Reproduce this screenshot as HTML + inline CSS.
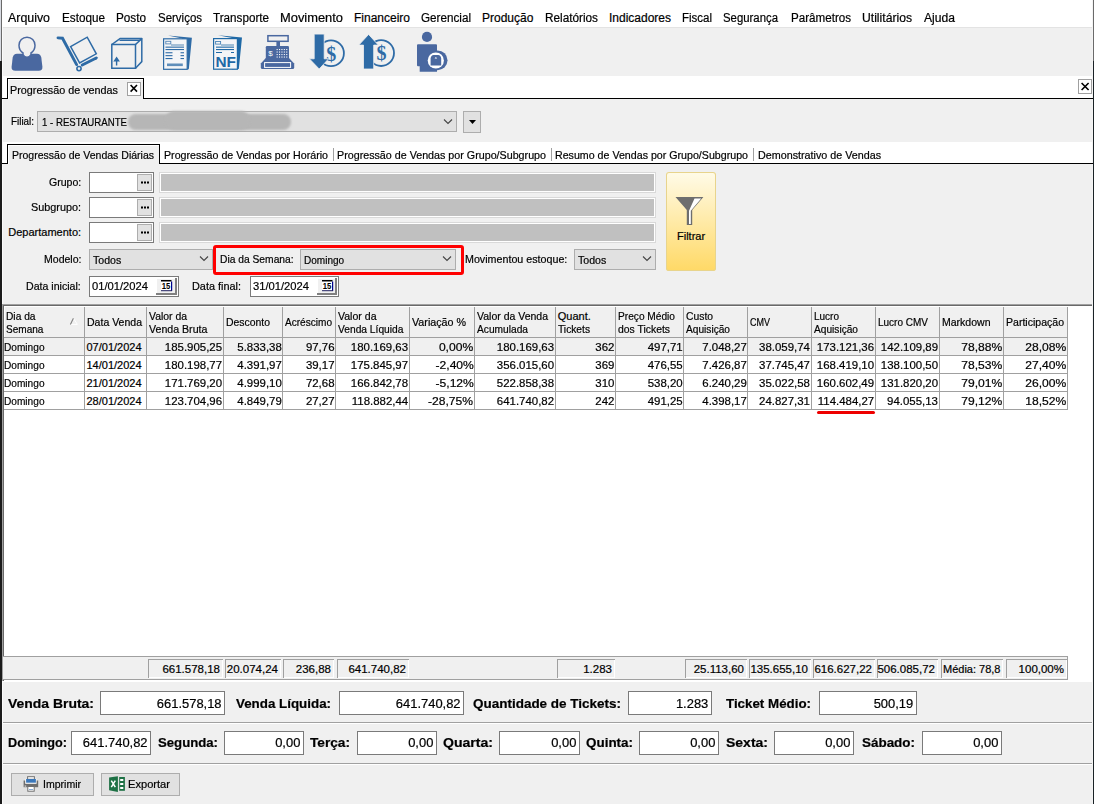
<!DOCTYPE html><html><head><meta charset="utf-8"><style>
html,body{margin:0;padding:0;}
body{width:1094px;height:804px;overflow:hidden;position:relative;background:#f0f0f0;font-family:"Liberation Sans",sans-serif;}
div{position:absolute;}
.t{white-space:nowrap;line-height:20px;height:20px;-webkit-text-stroke:0.2px currentColor;}
svg{position:absolute;left:0;top:0;}
</style></head><body>
<div style="left:0px;top:0px;width:1094px;height:27px;background:#fff"></div>
<div style="left:2px;top:27px;width:1091px;height:1px;background:#e3e3e3"></div>
<div style="left:2px;top:28px;width:1091px;height:48px;background:#f0f0f0"></div>
<div style="left:2px;top:76px;width:1091px;height:22px;background:#fff"></div>
<div style="left:2px;top:98px;width:1091px;height:1px;background:#000"></div>
<div class="t" style="left:8.00px;top:7.54px;font-size:12px;color:#000;transform:scaleX(1.0323);transform-origin:left;">Arquivo</div>
<div class="t" style="left:62.00px;top:7.54px;font-size:12px;color:#000;transform:scaleX(0.9766);transform-origin:left;">Estoque</div>
<div class="t" style="left:116.00px;top:7.54px;font-size:12px;color:#000;transform:scaleX(0.9777);transform-origin:left;">Posto</div>
<div class="t" style="left:158.00px;top:7.54px;font-size:12px;color:#000;transform:scaleX(0.9563);transform-origin:left;">Serviços</div>
<div class="t" style="left:213.00px;top:7.54px;font-size:12px;color:#000;transform:scaleX(0.9726);transform-origin:left;">Transporte</div>
<div class="t" style="left:280.00px;top:7.54px;font-size:12px;color:#000;transform:scaleX(1.0736);transform-origin:left;">Movimento</div>
<div class="t" style="left:354.00px;top:7.54px;font-size:12px;color:#000;">Financeiro</div>
<div class="t" style="left:421.00px;top:7.54px;font-size:12px;color:#000;transform:scaleX(0.9736);transform-origin:left;">Gerencial</div>
<div class="t" style="left:482.00px;top:7.54px;font-size:12px;color:#000;">Produção</div>
<div class="t" style="left:545.00px;top:7.54px;font-size:12px;color:#000;transform:scaleX(0.9811);transform-origin:left;">Relatórios</div>
<div class="t" style="left:609.00px;top:7.54px;font-size:12px;color:#000;">Indicadores</div>
<div class="t" style="left:682.00px;top:7.54px;font-size:12px;color:#000;transform:scaleX(0.9574);transform-origin:left;">Fiscal</div>
<div class="t" style="left:723.00px;top:7.54px;font-size:12px;color:#000;transform:scaleX(0.9476);transform-origin:left;">Segurança</div>
<div class="t" style="left:791.00px;top:7.54px;font-size:12px;color:#000;transform:scaleX(0.9675);transform-origin:left;">Parâmetros</div>
<div class="t" style="left:862.00px;top:7.54px;font-size:12px;color:#000;transform:scaleX(1.0134);transform-origin:left;">Utilitários</div>
<div class="t" style="left:924.00px;top:7.54px;font-size:12px;color:#000;transform:scaleX(1.0101);transform-origin:left;">Ajuda</div>
<div style="left:7px;top:78px;width:137px;height:21px;background:#000"></div>
<div style="left:8px;top:79px;width:135px;height:20px;background:#fff"></div>
<div style="left:9px;top:80px;width:134px;height:19px;background:#f0f0f0"></div>
<div class="t" style="left:9.50px;top:80.19px;font-size:11px;color:#000;transform:scaleX(0.9813);transform-origin:left;">Progressão de vendas</div>
<div style="left:127px;top:82px;width:14px;height:14px;background:#fff;box-shadow:inset 0 0 0 1px #a0a0a0"></div>
<div style="left:1078px;top:79px;width:14px;height:15px;background:#fff;box-shadow:inset 0 0 0 1px #a0a0a0"></div>
<div class="t" style="left:11.00px;top:111.19px;font-size:11px;color:#000;transform:scaleX(0.8961);transform-origin:left;">Filial:</div>
<div style="left:37px;top:111px;width:420px;height:21px;background:#e1e1e1;box-shadow:inset 0 0 0 1px #adadad"></div>
<div class="t" style="left:42.00px;top:112.19px;font-size:11px;color:#000;transform:scaleX(0.8765);transform-origin:left;">1 - RESTAURANTE</div>
<div style="left:463px;top:111px;width:18px;height:22px;background:#e1e1e1;box-shadow:inset 0 0 0 1px #adadad"></div>
<div style="left:2px;top:142px;width:1091px;height:21px;background:#fff"></div>
<div style="left:2px;top:163px;width:1091px;height:1px;background:#000"></div>
<div style="left:7px;top:144px;width:153px;height:20px;background:#000"></div>
<div style="left:8px;top:145px;width:151px;height:19px;background:#fff"></div>
<div style="left:9px;top:146px;width:150px;height:18px;background:#f0f0f0"></div>
<div class="t" style="left:11.50px;top:145.19px;font-size:11px;color:#000;transform:scaleX(0.9557);transform-origin:left;">Progressão de Vendas Diárias</div>
<div class="t" style="left:164.00px;top:145.19px;font-size:11px;color:#000;transform:scaleX(0.9683);transform-origin:left;">Progressão de Vendas por Horário</div>
<div class="t" style="left:337.00px;top:145.19px;font-size:11px;color:#000;transform:scaleX(0.9738);transform-origin:left;">Progressão de Vendas por Grupo/Subgrupo</div>
<div class="t" style="left:555.00px;top:145.19px;font-size:11px;color:#000;transform:scaleX(0.9682);transform-origin:left;">Resumo de Vendas por Grupo/Subgrupo</div>
<div class="t" style="left:758.00px;top:145.19px;font-size:11px;color:#000;transform:scaleX(0.9765);transform-origin:left;">Demonstrativo de Vendas</div>
<div style="left:333px;top:148px;width:1px;height:13px;background:#a0a0a0"></div>
<div style="left:551px;top:148px;width:1px;height:13px;background:#a0a0a0"></div>
<div style="left:753px;top:148px;width:1px;height:13px;background:#a0a0a0"></div>
<div class="t" style="left:48.70px;top:172.19px;font-size:11px;color:#000;transform:scaleX(0.9606);transform-origin:left;">Grupo:</div>
<div style="left:89px;top:172px;width:65px;height:21px;background:#fff;box-shadow:inset 0 0 0 1px #7a7a7a"></div>
<div style="left:137px;top:174px;width:15px;height:17px;background:#e1e1e1;box-shadow:inset 0 0 0 1px #adadad"></div>
<div style="left:159px;top:172px;width:497px;height:21px;background:#c0c0c0;box-shadow:inset 0 0 0 1px #d9d9d9,inset 0 0 0 2px #fff"></div>
<div class="t" style="left:31.00px;top:197.19px;font-size:11px;color:#000;transform:scaleX(0.9851);transform-origin:left;">Subgrupo:</div>
<div style="left:89px;top:197px;width:65px;height:21px;background:#fff;box-shadow:inset 0 0 0 1px #7a7a7a"></div>
<div style="left:137px;top:199px;width:15px;height:17px;background:#e1e1e1;box-shadow:inset 0 0 0 1px #adadad"></div>
<div style="left:159px;top:197px;width:497px;height:21px;background:#c0c0c0;box-shadow:inset 0 0 0 1px #d9d9d9,inset 0 0 0 2px #fff"></div>
<div class="t" style="left:8.30px;top:222.19px;font-size:11px;color:#000;">Departamento:</div>
<div style="left:89px;top:222px;width:65px;height:21px;background:#fff;box-shadow:inset 0 0 0 1px #7a7a7a"></div>
<div style="left:137px;top:224px;width:15px;height:17px;background:#e1e1e1;box-shadow:inset 0 0 0 1px #adadad"></div>
<div style="left:159px;top:222px;width:497px;height:21px;background:#c0c0c0;box-shadow:inset 0 0 0 1px #d9d9d9,inset 0 0 0 2px #fff"></div>
<div style="left:666px;top:172px;width:50px;height:99px;border-radius:3px;background:linear-gradient(#fffbe8,#ffd966);box-shadow:inset 0 0 0 1px #e8d48c"></div>
<div class="t" style="left:677.00px;top:226.19px;font-size:11px;color:#000;">Filtrar</div>
<div class="t" style="left:43.50px;top:249.19px;font-size:11px;color:#000;transform:scaleX(0.9583);transform-origin:left;">Modelo:</div>
<div style="left:89px;top:249px;width:124px;height:21px;background:#e1e1e1;box-shadow:inset 0 0 0 1px #adadad"></div>
<div class="t" style="left:93.00px;top:250.19px;font-size:11px;color:#000;transform:scaleX(0.9608);transform-origin:left;">Todos</div>
<div style="left:213px;top:245px;width:251px;height:30px;box-sizing:border-box;border:3px solid #f00;border-radius:3px"></div>
<div class="t" style="left:220.00px;top:249.19px;font-size:11px;color:#000;transform:scaleX(0.9331);transform-origin:left;">Dia da Semana:</div>
<div style="left:300px;top:249px;width:156px;height:21px;background:#e1e1e1;box-shadow:inset 0 0 0 1px #adadad"></div>
<div class="t" style="left:304.00px;top:250.19px;font-size:11px;color:#000;transform:scaleX(0.9110);transform-origin:left;">Domingo</div>
<div class="t" style="left:465.00px;top:249.19px;font-size:11px;color:#000;transform:scaleX(0.9728);transform-origin:left;">Movimentou estoque:</div>
<div style="left:574px;top:249px;width:82px;height:21px;background:#e1e1e1;box-shadow:inset 0 0 0 1px #adadad"></div>
<div class="t" style="left:578.00px;top:250.19px;font-size:11px;color:#000;transform:scaleX(0.9608);transform-origin:left;">Todos</div>
<div class="t" style="left:26.30px;top:276.19px;font-size:11px;color:#000;transform:scaleX(0.9621);transform-origin:left;">Data inicial:</div>
<div style="left:89px;top:276px;width:90px;height:21px;background:#fff;box-shadow:inset 0 0 0 1px #7a7a7a"></div>
<div class="t" style="left:92.00px;top:276.19px;font-size:11px;color:#000;transform:scaleX(1.0173);transform-origin:left;">01/01/2024</div>
<div style="left:156px;top:278px;width:21px;height:17px;background:#f0f0f0;box-shadow:inset -2px -2px 0 #808080,inset 1px 1px 0 #fff"></div>
<div class="t" style="left:191.70px;top:276.19px;font-size:11px;color:#000;transform:scaleX(0.9874);transform-origin:left;">Data final:</div>
<div style="left:250px;top:276px;width:89px;height:21px;background:#fff;box-shadow:inset 0 0 0 1px #7a7a7a"></div>
<div class="t" style="left:253.00px;top:276.19px;font-size:11px;color:#000;transform:scaleX(1.0173);transform-origin:left;">31/01/2024</div>
<div style="left:317px;top:278px;width:20px;height:17px;background:#f0f0f0;box-shadow:inset -2px -2px 0 #808080,inset 1px 1px 0 #fff"></div>
<div style="left:2px;top:304px;width:1091px;height:377px;background:#fff"></div>
<div style="left:2px;top:304px;width:1090px;height:1px;background:#a0a0a0"></div>
<div style="left:2px;top:304px;width:1px;height:377px;background:#a0a0a0"></div>
<div style="left:3px;top:305px;width:1089px;height:1px;background:#696969"></div>
<div style="left:3px;top:305px;width:1px;height:376px;background:#696969"></div>
<div style="left:4px;top:306px;width:1064px;height:31px;background:#f0f0f0"></div>
<div style="left:4px;top:306px;width:1064px;height:1px;background:#fff"></div>
<div style="left:4px;top:306px;width:1px;height:31px;background:#fff"></div>
<div style="left:4px;top:337px;width:1064px;height:1px;background:#a0a0a0"></div>
<div style="left:84px;top:307px;width:1px;height:30px;background:#a0a0a0"></div>
<div class="t" style="left:5.80px;top:305.89px;font-size:11px;color:#000;transform:scaleX(0.9278);transform-origin:left;">Dia da</div>
<div class="t" style="left:5.80px;top:318.89px;font-size:11px;color:#000;transform:scaleX(0.9129);transform-origin:left;">Semana</div>
<div style="left:146px;top:307px;width:1px;height:30px;background:#a0a0a0"></div>
<div class="t" style="left:86.80px;top:312.19px;font-size:11px;color:#000;transform:scaleX(0.9567);transform-origin:left;">Data Venda</div>
<div style="left:223px;top:307px;width:1px;height:30px;background:#a0a0a0"></div>
<div class="t" style="left:148.80px;top:305.89px;font-size:11px;color:#000;transform:scaleX(0.9464);transform-origin:left;">Valor da</div>
<div class="t" style="left:148.80px;top:318.89px;font-size:11px;color:#000;transform:scaleX(0.9646);transform-origin:left;">Venda Bruta</div>
<div style="left:282px;top:307px;width:1px;height:30px;background:#a0a0a0"></div>
<div class="t" style="left:225.80px;top:312.19px;font-size:11px;color:#000;transform:scaleX(0.9469);transform-origin:left;">Desconto</div>
<div style="left:335px;top:307px;width:1px;height:30px;background:#a0a0a0"></div>
<div class="t" style="left:284.80px;top:312.19px;font-size:11px;color:#000;transform:scaleX(0.9155);transform-origin:left;">Acréscimo</div>
<div style="left:409px;top:307px;width:1px;height:30px;background:#a0a0a0"></div>
<div class="t" style="left:337.80px;top:305.89px;font-size:11px;color:#000;transform:scaleX(0.9589);transform-origin:left;">Valor da</div>
<div class="t" style="left:337.80px;top:318.89px;font-size:11px;color:#000;transform:scaleX(0.9298);transform-origin:left;">Venda Líquida</div>
<div style="left:474px;top:307px;width:1px;height:30px;background:#a0a0a0"></div>
<div class="t" style="left:411.80px;top:312.19px;font-size:11px;color:#000;transform:scaleX(0.9741);transform-origin:left;">Variação %</div>
<div style="left:555px;top:307px;width:1px;height:30px;background:#a0a0a0"></div>
<div class="t" style="left:476.80px;top:305.89px;font-size:11px;color:#000;transform:scaleX(0.9542);transform-origin:left;">Valor da Venda</div>
<div class="t" style="left:476.80px;top:318.89px;font-size:11px;color:#000;transform:scaleX(0.9268);transform-origin:left;">Acumulada</div>
<div style="left:615px;top:307px;width:1px;height:30px;background:#a0a0a0"></div>
<div class="t" style="left:557.80px;top:305.89px;font-size:11px;color:#000;">Quant.</div>
<div class="t" style="left:557.80px;top:318.89px;font-size:11px;color:#000;transform:scaleX(0.9295);transform-origin:left;">Tickets</div>
<div style="left:683px;top:307px;width:1px;height:30px;background:#a0a0a0"></div>
<div class="t" style="left:617.80px;top:305.89px;font-size:11px;color:#000;transform:scaleX(0.9231);transform-origin:left;">Preço Médio</div>
<div class="t" style="left:617.80px;top:318.89px;font-size:11px;color:#000;transform:scaleX(0.9451);transform-origin:left;">dos Tickets</div>
<div style="left:747px;top:307px;width:1px;height:30px;background:#a0a0a0"></div>
<div class="t" style="left:685.80px;top:305.89px;font-size:11px;color:#000;transform:scaleX(0.9397);transform-origin:left;">Custo</div>
<div class="t" style="left:685.80px;top:318.89px;font-size:11px;color:#000;transform:scaleX(0.9226);transform-origin:left;">Aquisição</div>
<div style="left:811px;top:307px;width:1px;height:30px;background:#a0a0a0"></div>
<div class="t" style="left:749.80px;top:312.19px;font-size:11px;color:#000;transform:scaleX(0.8182);transform-origin:left;">CMV</div>
<div style="left:875px;top:307px;width:1px;height:30px;background:#a0a0a0"></div>
<div class="t" style="left:813.80px;top:305.89px;font-size:11px;color:#000;transform:scaleX(0.9086);transform-origin:left;">Lucro</div>
<div class="t" style="left:813.80px;top:318.89px;font-size:11px;color:#000;transform:scaleX(0.9226);transform-origin:left;">Aquisição</div>
<div style="left:939px;top:307px;width:1px;height:30px;background:#a0a0a0"></div>
<div class="t" style="left:877.80px;top:312.19px;font-size:11px;color:#000;transform:scaleX(0.9089);transform-origin:left;">Lucro CMV</div>
<div style="left:1003px;top:307px;width:1px;height:30px;background:#a0a0a0"></div>
<div class="t" style="left:941.80px;top:312.19px;font-size:11px;color:#000;transform:scaleX(0.9559);transform-origin:left;">Markdown</div>
<div style="left:1067px;top:307px;width:1px;height:30px;background:#a0a0a0"></div>
<div class="t" style="left:1005.80px;top:312.19px;font-size:11px;color:#000;transform:scaleX(0.9582);transform-origin:left;">Participação</div>
<div style="left:4px;top:338px;width:1064px;height:17px;background:#f0f0f0"></div>
<div style="left:4px;top:355px;width:1064px;height:1px;background:#a0a0a0"></div>
<div style="left:84px;top:338px;width:1px;height:17px;background:#a0a0a0"></div>
<div class="t" style="left:4.20px;top:337.19px;font-size:11px;color:#000;transform:scaleX(0.9201);transform-origin:left;">Domingo</div>
<div style="left:146px;top:338px;width:1px;height:17px;background:#a0a0a0"></div>
<div class="t" style="left:86.50px;top:337.19px;font-size:11px;color:#000;">07/01/2024</div>
<div style="left:223px;top:338px;width:1px;height:17px;background:#a0a0a0"></div>
<div class="t" style="left:167.35px;top:337.19px;font-size:11px;color:#000;transform:scaleX(1.0400);transform-origin:right;">185.905,25</div>
<div style="left:282px;top:338px;width:1px;height:17px;background:#a0a0a0"></div>
<div class="t" style="left:238.59px;top:337.19px;font-size:11px;color:#000;transform:scaleX(1.0400);transform-origin:right;">5.833,38</div>
<div style="left:335px;top:338px;width:1px;height:17px;background:#a0a0a0"></div>
<div class="t" style="left:306.88px;top:337.19px;font-size:11px;color:#000;transform:scaleX(1.0400);transform-origin:right;">97,76</div>
<div style="left:409px;top:338px;width:1px;height:17px;background:#a0a0a0"></div>
<div class="t" style="left:353.35px;top:337.19px;font-size:11px;color:#000;transform:scaleX(1.0400);transform-origin:right;">180.169,63</div>
<div style="left:474px;top:338px;width:1px;height:17px;background:#a0a0a0"></div>
<div class="t" style="left:442.21px;top:337.19px;font-size:11px;color:#000;transform:scaleX(1.1000);transform-origin:right;">0,00%</div>
<div style="left:555px;top:338px;width:1px;height:17px;background:#a0a0a0"></div>
<div class="t" style="left:499.35px;top:337.19px;font-size:11px;color:#000;transform:scaleX(1.0400);transform-origin:right;">180.169,63</div>
<div style="left:615px;top:338px;width:1px;height:17px;background:#a0a0a0"></div>
<div class="t" style="left:596.05px;top:337.19px;font-size:11px;color:#000;transform:scaleX(1.0400);transform-origin:right;">362</div>
<div style="left:683px;top:338px;width:1px;height:17px;background:#a0a0a0"></div>
<div class="t" style="left:648.76px;top:337.19px;font-size:11px;color:#000;transform:scaleX(1.0400);transform-origin:right;">497,71</div>
<div style="left:747px;top:338px;width:1px;height:17px;background:#a0a0a0"></div>
<div class="t" style="left:703.59px;top:337.19px;font-size:11px;color:#000;transform:scaleX(1.0400);transform-origin:right;">7.048,27</div>
<div style="left:811px;top:338px;width:1px;height:17px;background:#a0a0a0"></div>
<div class="t" style="left:761.47px;top:337.19px;font-size:11px;color:#000;transform:scaleX(1.0400);transform-origin:right;">38.059,74</div>
<div style="left:875px;top:338px;width:1px;height:17px;background:#a0a0a0"></div>
<div class="t" style="left:819.35px;top:337.19px;font-size:11px;color:#000;transform:scaleX(1.0400);transform-origin:right;">173.121,36</div>
<div style="left:939px;top:338px;width:1px;height:17px;background:#a0a0a0"></div>
<div class="t" style="left:883.35px;top:337.19px;font-size:11px;color:#000;transform:scaleX(1.0400);transform-origin:right;">142.109,89</div>
<div style="left:1003px;top:338px;width:1px;height:17px;background:#a0a0a0"></div>
<div class="t" style="left:965.09px;top:337.19px;font-size:11px;color:#000;transform:scaleX(1.1000);transform-origin:right;">78,88%</div>
<div style="left:1067px;top:338px;width:1px;height:17px;background:#a0a0a0"></div>
<div class="t" style="left:1029.09px;top:337.19px;font-size:11px;color:#000;transform:scaleX(1.1000);transform-origin:right;">28,08%</div>
<div style="left:4px;top:373px;width:1064px;height:1px;background:#a0a0a0"></div>
<div style="left:84px;top:356px;width:1px;height:17px;background:#a0a0a0"></div>
<div class="t" style="left:4.20px;top:355.19px;font-size:11px;color:#000;transform:scaleX(0.9201);transform-origin:left;">Domingo</div>
<div style="left:146px;top:356px;width:1px;height:17px;background:#a0a0a0"></div>
<div class="t" style="left:86.50px;top:355.19px;font-size:11px;color:#000;">14/01/2024</div>
<div style="left:223px;top:356px;width:1px;height:17px;background:#a0a0a0"></div>
<div class="t" style="left:167.35px;top:355.19px;font-size:11px;color:#000;transform:scaleX(1.0400);transform-origin:right;">180.198,77</div>
<div style="left:282px;top:356px;width:1px;height:17px;background:#a0a0a0"></div>
<div class="t" style="left:238.59px;top:355.19px;font-size:11px;color:#000;transform:scaleX(1.0400);transform-origin:right;">4.391,97</div>
<div style="left:335px;top:356px;width:1px;height:17px;background:#a0a0a0"></div>
<div class="t" style="left:306.88px;top:355.19px;font-size:11px;color:#000;transform:scaleX(1.0400);transform-origin:right;">39,17</div>
<div style="left:409px;top:356px;width:1px;height:17px;background:#a0a0a0"></div>
<div class="t" style="left:353.35px;top:355.19px;font-size:11px;color:#000;transform:scaleX(1.0400);transform-origin:right;">175.845,97</div>
<div style="left:474px;top:356px;width:1px;height:17px;background:#a0a0a0"></div>
<div class="t" style="left:438.55px;top:355.19px;font-size:11px;color:#000;transform:scaleX(1.1000);transform-origin:right;">-2,40%</div>
<div style="left:555px;top:356px;width:1px;height:17px;background:#a0a0a0"></div>
<div class="t" style="left:499.35px;top:355.19px;font-size:11px;color:#000;transform:scaleX(1.0400);transform-origin:right;">356.015,60</div>
<div style="left:615px;top:356px;width:1px;height:17px;background:#a0a0a0"></div>
<div class="t" style="left:596.05px;top:355.19px;font-size:11px;color:#000;transform:scaleX(1.0400);transform-origin:right;">369</div>
<div style="left:683px;top:356px;width:1px;height:17px;background:#a0a0a0"></div>
<div class="t" style="left:648.76px;top:355.19px;font-size:11px;color:#000;transform:scaleX(1.0400);transform-origin:right;">476,55</div>
<div style="left:747px;top:356px;width:1px;height:17px;background:#a0a0a0"></div>
<div class="t" style="left:703.59px;top:355.19px;font-size:11px;color:#000;transform:scaleX(1.0400);transform-origin:right;">7.426,87</div>
<div style="left:811px;top:356px;width:1px;height:17px;background:#a0a0a0"></div>
<div class="t" style="left:761.47px;top:355.19px;font-size:11px;color:#000;transform:scaleX(1.0400);transform-origin:right;">37.745,47</div>
<div style="left:875px;top:356px;width:1px;height:17px;background:#a0a0a0"></div>
<div class="t" style="left:819.35px;top:355.19px;font-size:11px;color:#000;transform:scaleX(1.0400);transform-origin:right;">168.419,10</div>
<div style="left:939px;top:356px;width:1px;height:17px;background:#a0a0a0"></div>
<div class="t" style="left:883.35px;top:355.19px;font-size:11px;color:#000;transform:scaleX(1.0400);transform-origin:right;">138.100,50</div>
<div style="left:1003px;top:356px;width:1px;height:17px;background:#a0a0a0"></div>
<div class="t" style="left:965.09px;top:355.19px;font-size:11px;color:#000;transform:scaleX(1.1000);transform-origin:right;">78,53%</div>
<div style="left:1067px;top:356px;width:1px;height:17px;background:#a0a0a0"></div>
<div class="t" style="left:1029.09px;top:355.19px;font-size:11px;color:#000;transform:scaleX(1.1000);transform-origin:right;">27,40%</div>
<div style="left:4px;top:391px;width:1064px;height:1px;background:#a0a0a0"></div>
<div style="left:84px;top:374px;width:1px;height:17px;background:#a0a0a0"></div>
<div class="t" style="left:4.20px;top:373.19px;font-size:11px;color:#000;transform:scaleX(0.9201);transform-origin:left;">Domingo</div>
<div style="left:146px;top:374px;width:1px;height:17px;background:#a0a0a0"></div>
<div class="t" style="left:86.50px;top:373.19px;font-size:11px;color:#000;">21/01/2024</div>
<div style="left:223px;top:374px;width:1px;height:17px;background:#a0a0a0"></div>
<div class="t" style="left:167.35px;top:373.19px;font-size:11px;color:#000;transform:scaleX(1.0400);transform-origin:right;">171.769,20</div>
<div style="left:282px;top:374px;width:1px;height:17px;background:#a0a0a0"></div>
<div class="t" style="left:238.59px;top:373.19px;font-size:11px;color:#000;transform:scaleX(1.0400);transform-origin:right;">4.999,10</div>
<div style="left:335px;top:374px;width:1px;height:17px;background:#a0a0a0"></div>
<div class="t" style="left:306.88px;top:373.19px;font-size:11px;color:#000;transform:scaleX(1.0400);transform-origin:right;">72,68</div>
<div style="left:409px;top:374px;width:1px;height:17px;background:#a0a0a0"></div>
<div class="t" style="left:353.35px;top:373.19px;font-size:11px;color:#000;transform:scaleX(1.0400);transform-origin:right;">166.842,78</div>
<div style="left:474px;top:374px;width:1px;height:17px;background:#a0a0a0"></div>
<div class="t" style="left:438.55px;top:373.19px;font-size:11px;color:#000;transform:scaleX(1.1000);transform-origin:right;">-5,12%</div>
<div style="left:555px;top:374px;width:1px;height:17px;background:#a0a0a0"></div>
<div class="t" style="left:499.35px;top:373.19px;font-size:11px;color:#000;transform:scaleX(1.0400);transform-origin:right;">522.858,38</div>
<div style="left:615px;top:374px;width:1px;height:17px;background:#a0a0a0"></div>
<div class="t" style="left:596.05px;top:373.19px;font-size:11px;color:#000;transform:scaleX(1.0400);transform-origin:right;">310</div>
<div style="left:683px;top:374px;width:1px;height:17px;background:#a0a0a0"></div>
<div class="t" style="left:648.76px;top:373.19px;font-size:11px;color:#000;transform:scaleX(1.0400);transform-origin:right;">538,20</div>
<div style="left:747px;top:374px;width:1px;height:17px;background:#a0a0a0"></div>
<div class="t" style="left:703.59px;top:373.19px;font-size:11px;color:#000;transform:scaleX(1.0400);transform-origin:right;">6.240,29</div>
<div style="left:811px;top:374px;width:1px;height:17px;background:#a0a0a0"></div>
<div class="t" style="left:761.47px;top:373.19px;font-size:11px;color:#000;transform:scaleX(1.0400);transform-origin:right;">35.022,58</div>
<div style="left:875px;top:374px;width:1px;height:17px;background:#a0a0a0"></div>
<div class="t" style="left:819.35px;top:373.19px;font-size:11px;color:#000;transform:scaleX(1.0400);transform-origin:right;">160.602,49</div>
<div style="left:939px;top:374px;width:1px;height:17px;background:#a0a0a0"></div>
<div class="t" style="left:883.35px;top:373.19px;font-size:11px;color:#000;transform:scaleX(1.0400);transform-origin:right;">131.820,20</div>
<div style="left:1003px;top:374px;width:1px;height:17px;background:#a0a0a0"></div>
<div class="t" style="left:965.09px;top:373.19px;font-size:11px;color:#000;transform:scaleX(1.1000);transform-origin:right;">79,01%</div>
<div style="left:1067px;top:374px;width:1px;height:17px;background:#a0a0a0"></div>
<div class="t" style="left:1029.09px;top:373.19px;font-size:11px;color:#000;transform:scaleX(1.1000);transform-origin:right;">26,00%</div>
<div style="left:4px;top:409px;width:1064px;height:1px;background:#a0a0a0"></div>
<div style="left:84px;top:392px;width:1px;height:17px;background:#a0a0a0"></div>
<div class="t" style="left:4.20px;top:391.19px;font-size:11px;color:#000;transform:scaleX(0.9201);transform-origin:left;">Domingo</div>
<div style="left:146px;top:392px;width:1px;height:17px;background:#a0a0a0"></div>
<div class="t" style="left:86.50px;top:391.19px;font-size:11px;color:#000;">28/01/2024</div>
<div style="left:223px;top:392px;width:1px;height:17px;background:#a0a0a0"></div>
<div class="t" style="left:167.35px;top:391.19px;font-size:11px;color:#000;transform:scaleX(1.0400);transform-origin:right;">123.704,96</div>
<div style="left:282px;top:392px;width:1px;height:17px;background:#a0a0a0"></div>
<div class="t" style="left:238.59px;top:391.19px;font-size:11px;color:#000;transform:scaleX(1.0400);transform-origin:right;">4.849,79</div>
<div style="left:335px;top:392px;width:1px;height:17px;background:#a0a0a0"></div>
<div class="t" style="left:306.88px;top:391.19px;font-size:11px;color:#000;transform:scaleX(1.0400);transform-origin:right;">27,27</div>
<div style="left:409px;top:392px;width:1px;height:17px;background:#a0a0a0"></div>
<div class="t" style="left:354.17px;top:391.19px;font-size:11px;color:#000;transform:scaleX(1.0400);transform-origin:right;">118.882,44</div>
<div style="left:474px;top:392px;width:1px;height:17px;background:#a0a0a0"></div>
<div class="t" style="left:432.43px;top:391.19px;font-size:11px;color:#000;transform:scaleX(1.1000);transform-origin:right;">-28,75%</div>
<div style="left:555px;top:392px;width:1px;height:17px;background:#a0a0a0"></div>
<div class="t" style="left:499.35px;top:391.19px;font-size:11px;color:#000;transform:scaleX(1.0400);transform-origin:right;">641.740,82</div>
<div style="left:615px;top:392px;width:1px;height:17px;background:#a0a0a0"></div>
<div class="t" style="left:596.05px;top:391.19px;font-size:11px;color:#000;transform:scaleX(1.0400);transform-origin:right;">242</div>
<div style="left:683px;top:392px;width:1px;height:17px;background:#a0a0a0"></div>
<div class="t" style="left:648.76px;top:391.19px;font-size:11px;color:#000;transform:scaleX(1.0400);transform-origin:right;">491,25</div>
<div style="left:747px;top:392px;width:1px;height:17px;background:#a0a0a0"></div>
<div class="t" style="left:703.59px;top:391.19px;font-size:11px;color:#000;transform:scaleX(1.0400);transform-origin:right;">4.398,17</div>
<div style="left:811px;top:392px;width:1px;height:17px;background:#a0a0a0"></div>
<div class="t" style="left:761.47px;top:391.19px;font-size:11px;color:#000;transform:scaleX(1.0400);transform-origin:right;">24.827,31</div>
<div style="left:875px;top:392px;width:1px;height:17px;background:#a0a0a0"></div>
<div class="t" style="left:820.17px;top:391.19px;font-size:11px;color:#000;transform:scaleX(1.0400);transform-origin:right;">114.484,27</div>
<div style="left:939px;top:392px;width:1px;height:17px;background:#a0a0a0"></div>
<div class="t" style="left:889.47px;top:391.19px;font-size:11px;color:#000;transform:scaleX(1.0400);transform-origin:right;">94.055,13</div>
<div style="left:1003px;top:392px;width:1px;height:17px;background:#a0a0a0"></div>
<div class="t" style="left:965.09px;top:391.19px;font-size:11px;color:#000;transform:scaleX(1.1000);transform-origin:right;">79,12%</div>
<div style="left:1067px;top:392px;width:1px;height:17px;background:#a0a0a0"></div>
<div class="t" style="left:1029.09px;top:391.19px;font-size:11px;color:#000;transform:scaleX(1.1000);transform-origin:right;">18,52%</div>
<div style="left:817px;top:411px;width:58px;height:3px;background:#e00;border-radius:2px"></div>
<div style="left:3px;top:656px;width:1065px;height:2px;background:#a0a0a0"></div>
<div style="left:3px;top:657px;width:1065px;height:23px;background:#f0f0f0"></div>
<div style="left:3px;top:679px;width:1065px;height:1px;background:#a0a0a0"></div>
<div style="left:1067px;top:656px;width:1px;height:24px;background:#a0a0a0"></div>
<div style="left:148px;top:659px;width:75px;height:19px;box-shadow:inset 1px 1px 0 #a0a0a0,inset -1px -1px 0 #fff"></div>
<div class="t" style="left:162.45px;top:658.52px;font-size:11.5px;color:#000;">661.578,18</div>
<div style="left:225px;top:659px;width:56px;height:19px;box-shadow:inset 1px 1px 0 #a0a0a0,inset -1px -1px 0 #fff"></div>
<div class="t" style="left:226.84px;top:658.52px;font-size:11.5px;color:#000;">20.074,24</div>
<div style="left:283px;top:659px;width:51px;height:19px;box-shadow:inset 1px 1px 0 #a0a0a0,inset -1px -1px 0 #fff"></div>
<div class="t" style="left:295.83px;top:658.52px;font-size:11.5px;color:#000;">236,88</div>
<div style="left:337px;top:659px;width:72px;height:19px;box-shadow:inset 1px 1px 0 #a0a0a0,inset -1px -1px 0 #fff"></div>
<div class="t" style="left:348.45px;top:658.52px;font-size:11.5px;color:#000;">641.740,82</div>
<div style="left:557px;top:659px;width:58px;height:19px;box-shadow:inset 1px 1px 0 #a0a0a0,inset -1px -1px 0 #fff"></div>
<div class="t" style="left:583.22px;top:658.52px;font-size:11.5px;color:#000;">1.283</div>
<div style="left:685px;top:659px;width:62px;height:19px;box-shadow:inset 1px 1px 0 #a0a0a0,inset -1px -1px 0 #fff"></div>
<div class="t" style="left:693.70px;top:658.52px;font-size:11.5px;color:#000;">25.113,60</div>
<div style="left:749px;top:659px;width:62px;height:19px;box-shadow:inset 1px 1px 0 #a0a0a0,inset -1px -1px 0 #fff"></div>
<div class="t" style="left:750.45px;top:658.52px;font-size:11.5px;color:#000;">135.655,10</div>
<div style="left:813px;top:659px;width:62px;height:19px;box-shadow:inset 1px 1px 0 #a0a0a0,inset -1px -1px 0 #fff"></div>
<div class="t" style="left:814.45px;top:658.52px;font-size:11.5px;color:#000;">616.627,22</div>
<div style="left:877px;top:659px;width:61px;height:19px;box-shadow:inset 1px 1px 0 #a0a0a0,inset -1px -1px 0 #fff"></div>
<div class="t" style="left:877.45px;top:658.52px;font-size:11.5px;color:#000;">506.085,72</div>
<div style="left:941px;top:659px;width:62px;height:19px;box-shadow:inset 1px 1px 0 #a0a0a0,inset -1px -1px 0 #fff"></div>
<div class="t" style="left:943.00px;top:658.69px;font-size:11px;color:#000;">Média: 78,8</div>
<div style="left:1006px;top:659px;width:61px;height:19px;box-shadow:inset 1px 1px 0 #a0a0a0,inset -1px -1px 0 #fff"></div>
<div class="t" style="left:1018.60px;top:658.52px;font-size:11.5px;color:#000;">100,00%</div>
<div style="left:2px;top:681px;width:1091px;height:1px;background:#fff"></div>
<div class="t" style="left:8.00px;top:694.07px;font-size:12.5px;font-weight:bold;color:#000;transform:scaleX(1.1155);transform-origin:left;">Venda Bruta:</div>
<div style="left:100px;top:691px;width:125px;height:24px;background:#fff;box-shadow:inset 0 0 0 1px #7a7a7a"></div>
<div class="t" style="left:158.95px;top:694.07px;font-size:12.5px;color:#000;transform:scaleX(1.0350);transform-origin:right;">661.578,18</div>
<div class="t" style="left:236.00px;top:694.07px;font-size:12.5px;font-weight:bold;color:#000;transform:scaleX(1.0687);transform-origin:left;">Venda Líquida:</div>
<div style="left:339px;top:691px;width:125px;height:24px;background:#fff;box-shadow:inset 0 0 0 1px #7a7a7a"></div>
<div class="t" style="left:397.95px;top:694.07px;font-size:12.5px;color:#000;transform:scaleX(1.0350);transform-origin:right;">641.740,82</div>
<div class="t" style="left:473.00px;top:694.07px;font-size:12.5px;font-weight:bold;color:#000;transform:scaleX(1.0780);transform-origin:left;">Quantidade de Tickets:</div>
<div style="left:628px;top:691px;width:84px;height:24px;background:#fff;box-shadow:inset 0 0 0 1px #7a7a7a"></div>
<div class="t" style="left:677.22px;top:694.07px;font-size:12.5px;color:#000;transform:scaleX(1.0350);transform-origin:right;">1.283</div>
<div class="t" style="left:726.00px;top:694.07px;font-size:12.5px;font-weight:bold;color:#000;transform:scaleX(1.0673);transform-origin:left;">Ticket Médio:</div>
<div style="left:819px;top:691px;width:98px;height:24px;background:#fff;box-shadow:inset 0 0 0 1px #7a7a7a"></div>
<div class="t" style="left:875.27px;top:694.07px;font-size:12.5px;color:#000;transform:scaleX(1.0350);transform-origin:right;">500,19</div>
<div style="left:2px;top:722px;width:1091px;height:1px;background:#a0a0a0"></div>
<div style="left:2px;top:723px;width:1091px;height:1px;background:#fff"></div>
<div class="t" style="left:8.00px;top:732.87px;font-size:12.5px;font-weight:bold;color:#000;transform:scaleX(1.0117);transform-origin:left;">Domingo:</div>
<div style="left:71px;top:731px;width:80px;height:24px;background:#fff;box-shadow:inset 0 0 0 1px #7a7a7a"></div>
<div class="t" style="left:84.95px;top:732.87px;font-size:12.5px;color:#000;transform:scaleX(1.0350);transform-origin:right;">641.740,82</div>
<div class="t" style="left:158.00px;top:732.87px;font-size:12.5px;font-weight:bold;color:#000;transform:scaleX(1.0537);transform-origin:left;">Segunda:</div>
<div style="left:224px;top:731px;width:80px;height:24px;background:#fff;box-shadow:inset 0 0 0 1px #7a7a7a"></div>
<div class="t" style="left:276.17px;top:732.87px;font-size:12.5px;color:#000;transform:scaleX(1.0350);transform-origin:right;">0,00</div>
<div class="t" style="left:310.00px;top:732.87px;font-size:12.5px;font-weight:bold;color:#000;transform:scaleX(1.0933);transform-origin:left;">Terça:</div>
<div style="left:357px;top:731px;width:80px;height:24px;background:#fff;box-shadow:inset 0 0 0 1px #7a7a7a"></div>
<div class="t" style="left:409.17px;top:732.87px;font-size:12.5px;color:#000;transform:scaleX(1.0350);transform-origin:right;">0,00</div>
<div class="t" style="left:443.00px;top:732.87px;font-size:12.5px;font-weight:bold;color:#000;transform:scaleX(1.1249);transform-origin:left;">Quarta:</div>
<div style="left:499px;top:731px;width:81px;height:24px;background:#fff;box-shadow:inset 0 0 0 1px #7a7a7a"></div>
<div class="t" style="left:552.17px;top:732.87px;font-size:12.5px;color:#000;transform:scaleX(1.0350);transform-origin:right;">0,00</div>
<div class="t" style="left:586.00px;top:732.87px;font-size:12.5px;font-weight:bold;color:#000;transform:scaleX(1.0745);transform-origin:left;">Quinta:</div>
<div style="left:639px;top:731px;width:80px;height:24px;background:#fff;box-shadow:inset 0 0 0 1px #7a7a7a"></div>
<div class="t" style="left:691.17px;top:732.87px;font-size:12.5px;color:#000;transform:scaleX(1.0350);transform-origin:right;">0,00</div>
<div class="t" style="left:726.00px;top:732.87px;font-size:12.5px;font-weight:bold;color:#000;transform:scaleX(1.1195);transform-origin:left;">Sexta:</div>
<div style="left:774px;top:731px;width:80px;height:24px;background:#fff;box-shadow:inset 0 0 0 1px #7a7a7a"></div>
<div class="t" style="left:826.17px;top:732.87px;font-size:12.5px;color:#000;transform:scaleX(1.0350);transform-origin:right;">0,00</div>
<div class="t" style="left:862.00px;top:732.87px;font-size:12.5px;font-weight:bold;color:#000;transform:scaleX(1.0749);transform-origin:left;">Sábado:</div>
<div style="left:922px;top:731px;width:80px;height:24px;background:#fff;box-shadow:inset 0 0 0 1px #7a7a7a"></div>
<div class="t" style="left:974.17px;top:732.87px;font-size:12.5px;color:#000;transform:scaleX(1.0350);transform-origin:right;">0,00</div>
<div style="left:2px;top:763px;width:1091px;height:1px;background:#a0a0a0"></div>
<div style="left:2px;top:764px;width:1091px;height:1px;background:#fff"></div>
<div style="left:11px;top:773px;width:83px;height:23px;background:#e1e1e1;box-shadow:inset 0 0 0 1px #adadad"></div>
<div class="t" style="left:42.50px;top:774.19px;font-size:11px;color:#000;transform:scaleX(0.9569);transform-origin:left;">Imprimir</div>
<div style="left:101px;top:773px;width:79px;height:23px;background:#e1e1e1;box-shadow:inset 0 0 0 1px #adadad"></div>
<div class="t" style="left:128.00px;top:774.19px;font-size:11px;color:#000;transform:scaleX(1.0104);transform-origin:left;">Exportar</div>
<div style="left:2px;top:27px;width:1px;height:277px;background:#fafafa"></div>
<div style="left:2px;top:681px;width:1px;height:123px;background:#fafafa"></div>
<div style="left:2px;top:98px;width:1px;height:1px;background:#000"></div>
<div style="left:2px;top:163px;width:1px;height:1px;background:#000"></div>
<div style="left:0px;top:0px;width:1px;height:61px;background:#d8dbe2"></div>
<div style="left:1px;top:0px;width:1px;height:61px;background:#6a6a6a"></div>
<div style="left:0px;top:61px;width:2px;height:743px;background:#1b1b1b"></div>
<div style="left:1092px;top:0px;width:1px;height:804px;background:#f4f4f4"></div>
<div style="left:1092px;top:98px;width:1px;height:1px;background:#000"></div>
<div style="left:1092px;top:163px;width:1px;height:1px;background:#000"></div>
<div style="left:1093px;top:0px;width:1px;height:61px;background:#6a6a6a"></div>
<div style="left:1093px;top:61px;width:1px;height:743px;background:#1a2226"></div>
<svg width="1094" height="804" viewBox="0 0 1094 804" style="left:0;top:0">
<!-- person -->
<path d="M17,53.7 L37,53.7 Q40.6,53.7 41.3,57.5 L42.4,66.8 Q42.8,70.8 38.6,70.8 L15.4,70.8 Q11.2,70.8 11.6,66.8 L12.7,57.5 Q13.4,53.7 17,53.7 Z" fill="#4a68a0"/>
<path d="M27,37.2 C31.6,37.2 35,40.6 35,45.3 C35,49.2 32.6,52 31,53 L31,54.5 C29.8,56.8 28.2,57.2 27,57.2 C25.8,57.2 24.2,56.8 23,54.5 L23,53 C21.4,52 19,49.2 19,45.3 C19,40.6 22.4,37.2 27,37.2 Z" fill="#f0f0f0" stroke="#4a68a0" stroke-width="1.5"/>
<!-- cart -->
<path d="M58,37.9 L62.5,38.2 L76.6,64.6" fill="none" stroke="#2e6ba6" stroke-width="2.9" stroke-linecap="round"/>
<circle cx="79" cy="68.6" r="2.1" fill="none" stroke="#2e6ba6" stroke-width="1.6"/>
<path d="M70.6,46.6 L87.2,37.2 L96.3,53.8 L79.6,62.9 Z" fill="none" stroke="#2e6ba6" stroke-width="1.5"/>
<path d="M82.2,65 L96.2,58" fill="none" stroke="#2e6ba6" stroke-width="2.9" stroke-linecap="round"/>
<!-- box -->
<path d="M111.8,44.5 L135.5,44.5 L135.5,68.2 L111.8,68.2 Z" fill="none" stroke="#2e6ba6" stroke-width="1.5"/>
<path d="M111.8,44.5 L120,38.6 L141.8,38.6 L135.5,44.5" fill="none" stroke="#2e6ba6" stroke-width="1.5" stroke-linejoin="round"/>
<path d="M120.5,39.6 L141,39.6 L139.5,41 L119,41 Z" fill="#2e6ba6"/>
<path d="M141.8,38.6 L141.8,61.6 L135.5,68.2" fill="none" stroke="#2e6ba6" stroke-width="1.5"/>
<path d="M116.6,65.6 L116.6,59.5 M114.6,60.8 L116.6,57.8 L118.6,60.8 Z" fill="#2e6ba6" stroke="#2e6ba6" stroke-width="1.4"/>
<!-- doc -->
<path d="M168,35.6 L191.9,37.8 L188.8,69.2 L182,69.6 L182,38.5 Z" fill="#2e6ba6"/>
<rect x="163.6" y="38.8" width="23.6" height="30.5" fill="#f4f5f7" stroke="#2e6ba6" stroke-width="1.2"/>
<rect x="165.8" y="41.3" width="5" height="2.6" fill="none" stroke="#2e6ba6" stroke-width="0.9" opacity="0.8"/>
<rect x="171" y="44.3" width="13" height="1.4" fill="#2e6ba6" opacity="0.55"/>
<rect x="165.5" y="46.6" width="18.5" height="1.1" fill="#2e6ba6"/>
<rect x="165.5" y="49" width="18.5" height="1.1" fill="#2e6ba6"/>
<rect x="165.5" y="52.2" width="7" height="1.1" fill="#2e6ba6"/><rect x="180.5" y="52.2" width="3.5" height="1.1" fill="#2e6ba6"/>
<rect x="165.5" y="55.1" width="7" height="1.1" fill="#2e6ba6"/><rect x="180.5" y="55.1" width="3.5" height="1.1" fill="#2e6ba6"/>
<rect x="165.5" y="58" width="7" height="1.1" fill="#2e6ba6"/><rect x="180.5" y="58" width="3.5" height="1.1" fill="#2e6ba6"/>
<rect x="167" y="63.5" width="15.8" height="2.6" fill="#2e6ba6" opacity="0.75"/>
<!-- NF -->
<path d="M218,35.2 L242,37.5 L238.8,69 L232,69.4 L232,38 Z" fill="#1f69a6"/>
<rect x="213.6" y="38.6" width="23.8" height="30.6" fill="#f4f5f7" stroke="#1f69a6" stroke-width="1.2"/>
<rect x="215.6" y="41.5" width="5" height="2.6" fill="none" stroke="#1f69a6" stroke-width="0.9" opacity="0.8"/>
<rect x="221" y="44.3" width="13" height="1.4" fill="#1f69a6" opacity="0.55"/>
<rect x="216" y="46.6" width="18" height="1.1" fill="#1f69a6"/>
<rect x="216" y="49" width="18" height="1.1" fill="#1f69a6"/>
<rect x="216" y="52" width="6" height="1" fill="#1f69a6"/><rect x="231" y="52" width="3" height="1" fill="#1f69a6"/>
<text x="215.5" y="66.8" font-family="Liberation Sans" font-weight="bold" font-size="15.5" fill="#1f69a6" textLength="20.5" lengthAdjust="spacingAndGlyphs">NF</text>
<!-- cash register -->
<rect x="267.9" y="35.7" width="20.2" height="5.6" fill="none" stroke="#4a68a0" stroke-width="1.5"/>
<rect x="276.4" y="41.5" width="3.6" height="5" fill="#4a68a0"/>
<rect x="265.8" y="46" width="23.2" height="14" rx="1.2" fill="#4a68a0"/>
<path d="M265.8,58 L289,58 L294.2,63.5 L294.2,67.5 Q294.2,69 292.7,69 L262.3,69 Q260.8,69 260.8,67.5 L260.8,63.5 Z" fill="#4a68a0"/>
<rect x="264.6" y="62.6" width="26" height="4.8" fill="none" stroke="#fff" stroke-width="1"/>
<text x="268.3" y="55.5" font-family="Liberation Sans" font-size="8" fill="#fff">$</text>
<g fill="#fff">
<rect x="276.6" y="49" width="1.1" height="1.1"/><rect x="279" y="49" width="1.1" height="1.1"/><rect x="281.4" y="49" width="1.1" height="1.1"/><rect x="283.8" y="49" width="1.1" height="1.1"/><rect x="286.2" y="49" width="1.1" height="1.1"/>
<rect x="276.6" y="51.5" width="1.1" height="1.1"/><rect x="279" y="51.5" width="1.1" height="1.1"/><rect x="281.4" y="51.5" width="1.1" height="1.1"/><rect x="283.8" y="51.5" width="1.1" height="1.1"/><rect x="286.2" y="51.5" width="1.1" height="1.1"/>
<rect x="276.6" y="54" width="1.1" height="1.1"/><rect x="279" y="54" width="1.1" height="1.1"/><rect x="281.4" y="54" width="1.1" height="1.1"/><rect x="283.8" y="54" width="1.1" height="1.1"/><rect x="286.2" y="54" width="1.1" height="1.1"/>
<rect x="276.6" y="56.5" width="1.1" height="1.1"/><rect x="279" y="56.5" width="1.1" height="1.1"/><rect x="281.4" y="56.5" width="1.1" height="1.1"/><rect x="283.8" y="56.5" width="1.1" height="1.1"/><rect x="286.2" y="56.5" width="1.1" height="1.1"/>
</g>
<!-- down arrow $ -->
<circle cx="331" cy="53.25" r="12.9" fill="none" stroke="#2e6ba6" stroke-width="1.8"/>
<text x="331.3" y="60.6" text-anchor="middle" font-family="Liberation Serif" font-weight="bold" font-size="20" fill="#2e6ba6">$</text>
<path d="M314.2,34.1 L324.2,34.1 L324.2,58.8 L328.6,58.8 L319.2,69 L309.4,58.8 L314.2,58.8 Z" fill="#2e6ba6" stroke="#f0f0f0" stroke-width="0.8"/>
<!-- up arrow $ -->
<circle cx="381.1" cy="53.1" r="12.9" fill="none" stroke="#2e6ba6" stroke-width="1.8"/>
<text x="381.6" y="60.4" text-anchor="middle" font-family="Liberation Serif" font-weight="bold" font-size="20" fill="#2e6ba6">$</text>
<path d="M368.6,34.4 L378.3,45.1 L373.7,45.1 L373.7,69 L363.5,69 L363.5,45.1 L358.8,45.1 Z" fill="#2e6ba6" stroke="#f0f0f0" stroke-width="0.8"/>
<!-- lock person -->
<circle cx="427" cy="36.9" r="5.1" fill="#4a68a0"/>
<path d="M418,44.2 L436,44.2 Q437,44.2 437,45.2 L437,71.8 L419.7,71.8 L419.7,66.3 L418,66.3 Q417,66.3 417,65.3 L417,45.2 Q417,44.2 418,44.2 Z" fill="#4a68a0"/>
<circle cx="437.6" cy="60.3" r="9.9" fill="#4a68a0"/>
<circle cx="435.8" cy="60.5" r="8.1" fill="#fff"/>
<path d="M430.6,65.6 L430.6,58.6 Q431,55.2 433.6,55 L438.2,55 Q440.8,55.2 441.2,58.6 L441.2,65.6 Z" fill="#4a68a0"/>
<path d="M434.6,58.6 L435.9,57 L437.2,58.6 Z" fill="#fff"/>
<!-- X glyphs -->
<path d="M130.6,85 L137,91.6 M137,85 L130.6,91.6" stroke="#000" stroke-width="1.6"/>
<path d="M1081.6,83 L1088.6,90 M1088.6,83 L1081.6,90" stroke="#000" stroke-width="1.6"/>
<!-- filial chevron + dropdown -->
<path d="M444,119.5 L448,123.5 L452,119.5" fill="none" stroke="#444" stroke-width="1.1"/>
<path d="M469,120 L476,120 L472.5,124 Z" fill="#000"/>
<!-- combo chevrons -->
<path d="M200,256.5 L204,260.5 L208,256.5" fill="none" stroke="#444" stroke-width="1.1"/>
<path d="M443,256.5 L447,260.5 L451,256.5" fill="none" stroke="#444" stroke-width="1.1"/>
<path d="M643,256.5 L647,260.5 L651,256.5" fill="none" stroke="#444" stroke-width="1.1"/>
<!-- funnel -->
<path d="M675.5,197 L703.4,197 L692.2,210 L692.2,225 L686.8,225 L686.8,210 Z" fill="#6e6e6e"/>
<path d="M694.5,198.4 L701.2,198.4 L690.8,210.8 L690.8,224 L689,224 L689,210.8 Z" fill="#fff"/>
<!-- sort triangle -->
<path d="M73.4,318.3 L77.4,324.4 L70.6,324.4" fill="none" stroke="#fff" stroke-width="1"/><path d="M73.4,318.3 L70.4,324.4" fill="none" stroke="#808080" stroke-width="1.1"/>
<!-- printer -->
<path d="M23.6,780.5 L38.2,780.5 L38.2,787.2 L23.6,787.2 Z" fill="#6e6e6e"/>
<rect x="25.2" y="779.2" width="11.4" height="4.6" fill="#fff"/>
<rect x="27.6" y="776.7" width="6.8" height="2.6" fill="#fff" stroke="#707070" stroke-width="1"/>
<rect x="26.1" y="779" width="9.8" height="3.7" fill="#3b78bb"/>
<rect x="24.6" y="785.6" width="1.6" height="0.9" fill="#fff"/>
<rect x="27.8" y="786.5" width="6.4" height="4.7" fill="#fff" stroke="#707070" stroke-width="1"/>
<rect x="29" y="789.1" width="4" height="0.8" fill="#6a9ad0"/>
<!-- excel -->
<path d="M109.1,777.4 L117.9,776.2 L117.9,791.9 L109.1,790.2 Z" fill="#1e7145"/>
<rect x="119.2" y="777" width="5.7" height="13.8" fill="#1e7145"/>
<rect x="120.2" y="779" width="3.1" height="2" fill="#fff"/><rect x="120.2" y="783" width="3.1" height="2" fill="#fff"/><rect x="120.2" y="787" width="3.1" height="2" fill="#fff"/>
<path d="M111.3,780.6 L115.3,787.2 M115.3,780.6 L111.3,787.2" stroke="#fff" stroke-width="1.5"/>
<!-- dots -->
<g fill="#000"><rect x="141" y="181.5" width="2" height="2"/><rect x="144" y="181.5" width="2" height="2"/><rect x="147" y="181.5" width="2" height="2"/>
<rect x="141" y="206.5" width="2" height="2"/><rect x="144" y="206.5" width="2" height="2"/><rect x="147" y="206.5" width="2" height="2"/>
<rect x="141" y="231.5" width="2" height="2"/><rect x="144" y="231.5" width="2" height="2"/><rect x="147" y="231.5" width="2" height="2"/></g>
<!-- calendar 15 -->
<rect x="161" y="281" width="10" height="9.5" fill="#fff"/>
<rect x="161" y="280" width="10.5" height="1.5" fill="#000"/>
<rect x="171" y="281.5" width="1.2" height="9.5" fill="#00008b"/>
<rect x="161" y="290.2" width="11" height="1" fill="#202060"/>
<text x="161.8" y="289.4" font-family="Liberation Sans" font-weight="bold" font-size="9" fill="#000" textLength="8.6" lengthAdjust="spacingAndGlyphs">15</text>
<rect x="322" y="281" width="10" height="9.5" fill="#fff"/>
<rect x="322" y="280" width="10.5" height="1.5" fill="#000"/>
<rect x="332" y="281.5" width="1.2" height="9.5" fill="#00008b"/>
<rect x="322" y="290.2" width="11" height="1" fill="#202060"/>
<text x="322.8" y="289.4" font-family="Liberation Sans" font-weight="bold" font-size="9" fill="#000" textLength="8.6" lengthAdjust="spacingAndGlyphs">15</text>
</svg>
<div style="left:128px;top:113.5px;width:163px;height:16.5px;background:#b6b6b6;border-radius:9px;filter:blur(1px)"></div>
<div style="left:165px;top:111px;width:85px;height:19px;background:#b6b6b6;border-radius:9px;filter:blur(1px)"></div>
</body></html>
